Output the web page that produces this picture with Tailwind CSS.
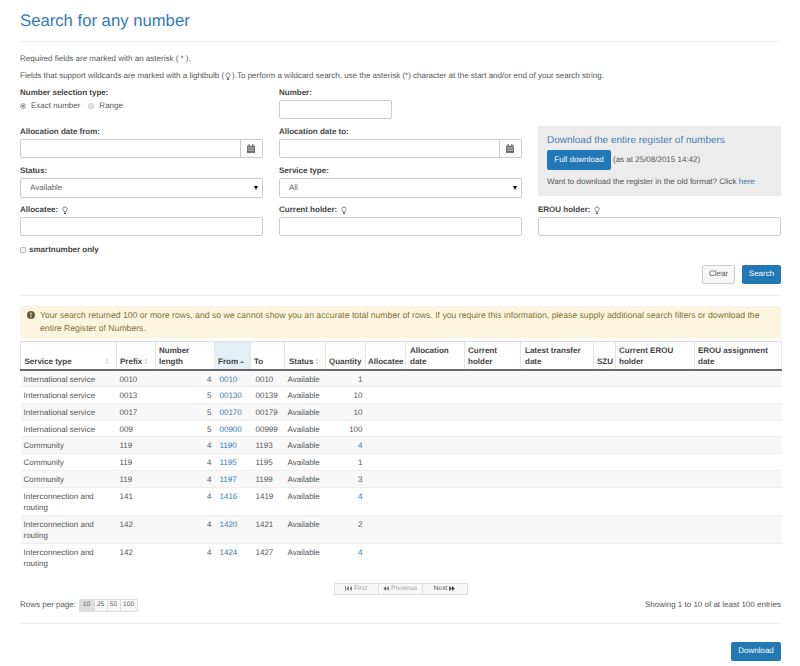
<!DOCTYPE html>
<html lang="en">
<head>
<meta charset="utf-8">
<title>Search for any number</title>
<script src="https://cdn.jsdelivr.net/npm/@tailwindcss/browser@4"></script>
</head>
<body class="bg-white font-['Liberation_Sans',Arial,sans-serif] [text-rendering:geometricPrecision] text-[8px] leading-[12px] text-[#555]">
<svg class="hidden" aria-hidden="true">
  <symbol id="bulb" viewBox="0 0 10 14"><path d="M5 1a3.6 3.6 0 0 0-2.2 6.4c.6.6.9 1.2.9 2h2.6c0-.8.3-1.4.9-2A3.6 3.6 0 0 0 5 1z" fill="none" stroke="currentColor" stroke-width="1.1"/><rect x="3.5" y="10.3" width="3" height="2.6" rx=".6" fill="currentColor"/></symbol>
  <symbol id="cal" viewBox="0 0 10 11"><path d="M0 2h10v9H0z" fill="currentColor"/><path d="M2 0h1.4v2.4H2zM6.6 0H8v2.4H6.6z" fill="currentColor"/><path d="M.8 4h8.4M.8 6h8.4M.8 8h8.4" stroke="#fff" stroke-width=".6"/></symbol>
  <symbol id="sort" viewBox="0 0 6 10"><path d="M3 1l2 2.6H1zM3 9L1 6.4h4z" fill="#bbb"/></symbol>
  <symbol id="first" viewBox="0 0 11 8"><path d="M0 0h1.4v8H0zM6 0v8L2 4zM11 0v8L7 4z" fill="currentColor"/></symbol>
  <symbol id="prev" viewBox="0 0 9 8"><path d="M4.5 0v8L0 4zM9 0v8L4.500 4z" fill="currentColor"/></symbol>
  <symbol id="next" viewBox="0 0 9 8"><path d="M0 0v8l4.500-4zM4.500 0v8L9 4z" fill="currentColor"/></symbol>
</svg>
<main class="w-[800px] h-[666px] overflow-hidden pl-[20px] pr-[19px]">
  <h1 class="pt-[10px] text-[16.7px] leading-[21px] text-[#337ab7] pb-[10px] border-b border-[#eee]">Search for any number</h1>

  <p class="mt-[11px] leading-[12px]">Required fields are marked with an asterisk ( <span class="text-[#c9302c]">*</span> ).</p>
  <p class="mt-[5px] leading-[12px] flex items-center whitespace-pre">Fields that support wildcards are marked with a lightbulb (<svg class="mx-[1px] w-[6px] h-[9px] text-[#555]"><use href="#bulb"/></svg>).To perform a wildcard search, use the asterisk (*) character at the start and/or end of your search string.</p>

  <div class="mt-[5px] grid grid-cols-[242.5px_242.5px_242.5px] gap-x-[16.5px]">
    <div class="h-[39px]">
      <div class="font-bold text-[#444]">Number selection type:</div>
      <div class="mt-[1px] flex items-center">
        <span class="w-[6px] h-[6px] rounded-full border border-[#bbb] bg-[#777] shadow-[inset_0_0_0_1px_#eee] mr-[5px]"></span><span>Exact number</span>
        <span class="ml-[8px] w-[6px] h-[6px] rounded-full border border-[#ccc] bg-[#e4e4e4] mr-[5px]"></span><span>Range</span>
      </div>
    </div>
    <div class="h-[39px]">
      <div class="font-bold text-[#444]">Number:</div>
      <div class="mt-[1px] w-[113px] h-[19px] rounded-[2px] border border-[#ccc] bg-white"></div>
    </div>
    <div></div>

    <div class="h-[39px]">
      <div class="font-bold text-[#444]">Allocation date from:</div>
      <div class="mt-[1px] h-[19px] flex rounded-[2px] border border-[#ccc]">
        <div class="flex-1"></div>
        <div class="w-[22px] border-l border-[#ccc] flex items-center justify-center text-[#666]"><svg class="w-[8px] h-[9px]"><use href="#cal"/></svg></div>
      </div>
    </div>
    <div class="h-[39px]">
      <div class="font-bold text-[#444]">Allocation date to:</div>
      <div class="mt-[1px] h-[19px] flex rounded-[2px] border border-[#ccc]">
        <div class="flex-1"></div>
        <div class="w-[22px] border-l border-[#ccc] flex items-center justify-center text-[#666]"><svg class="w-[8px] h-[9px]"><use href="#cal"/></svg></div>
      </div>
    </div>
    <div class="row-span-2 h-[70px] bg-[#ececec] px-[9px] pt-[9px]">
      <div class="text-[10px] leading-[12px] text-[#4a7fb5]">Download the entire register of numbers</div>
      <div class="mt-[3px] flex items-center">
        <span class="h-[19.5px] w-[64px] rounded-[2px] bg-[#2277b5] text-white flex items-center justify-center">Full download</span>
        <span class="ml-[2px]">(as at 25/08/2015 14:42)</span>
      </div>
      <div class="mt-[6.5px]">Want to download the register in the old format? Click <span class="text-[#337ab7]">here</span></div>
    </div>

    <div class="h-[39px]">
      <div class="font-bold text-[#444]">Status:</div>
      <div class="mt-[1px] h-[20px] flex items-center justify-between rounded-[2px] border border-[#ccc] pl-[9px] pr-[4px]"><span class="text-[#666]">Available</span><span class="w-0 h-0 border-x-[2.5px] border-x-transparent border-t-[4px] border-t-black"></span></div>
    </div>
    <div class="h-[39px]">
      <div class="font-bold text-[#444]">Service type:</div>
      <div class="mt-[1px] h-[20px] flex items-center justify-between rounded-[2px] border border-[#ccc] pl-[9px] pr-[4px]"><span class="text-[#666]">All</span><span class="w-0 h-0 border-x-[2.5px] border-x-transparent border-t-[4px] border-t-black"></span></div>
    </div>

    <div>
      <div class="font-bold text-[#444] flex items-center">Allocatee:<svg class="ml-[4px] w-[6px] h-[9px] text-[#444]"><use href="#bulb"/></svg></div>
      <div class="mt-[1px] h-[19px] rounded-[2px] border border-[#ccc]"></div>
    </div>
    <div>
      <div class="font-bold text-[#444] flex items-center">Current holder:<svg class="ml-[4px] w-[6px] h-[9px] text-[#444]"><use href="#bulb"/></svg></div>
      <div class="mt-[1px] h-[19px] rounded-[2px] border border-[#ccc]"></div>
    </div>
    <div>
      <div class="font-bold text-[#444] flex items-center">EROU holder:<svg class="ml-[4px] w-[6px] h-[9px] text-[#444]"><use href="#bulb"/></svg></div>
      <div class="mt-[1px] h-[19px] rounded-[2px] border border-[#ccc]"></div>
    </div>
  </div>

  <div class="mt-[8px] flex items-center font-bold text-[#444]"><span class="w-[6px] h-[6px] rounded-[1px] border border-[#bbb] bg-[#f2f2f2] mr-[3px]"></span>smartnumber only</div>

  <div class="mt-[9px] flex justify-end gap-[7px]">
    <span class="w-[33px] h-[18.5px] rounded-[2px] border border-[#ccc] bg-[#f7f7f7] text-[#555] flex items-center justify-center">Clear</span>
    <span class="w-[39px] h-[18.5px] rounded-[2px] bg-[#2277b5] text-white flex items-center justify-center">Search</span>
  </div>
  <div class="mt-[11px] border-t border-[#eee]"></div>

  <div class="mt-[10px] h-[32px] rounded-[2px] bg-[#fcf6e0] text-[#8a6d3b] pl-[20px] pr-[8px] pt-[3px] text-[8.67px] leading-[13px] relative">
    <svg class="absolute left-[7px] top-[5px] w-[8px] h-[8px]" viewBox="0 0 8 8"><circle cx="4" cy="4" r="4" fill="#6b5a3a"/><path d="M3.500 1.500h1l-.1 3.200h-.8zM3.500 5.300h1v1.100h-1z" fill="#fcf6e0"/></svg>
    Your search returned 100 or more rows, and so we cannot show you an accurate total number of rows. If you require this information, please supply additional search filters or download the entire Register of Numbers.
  </div>

  <table class="mt-[3px] w-[761px] table-fixed border-collapse text-[8px] leading-[11px]">
    <colgroup>
      <col class="w-[96px]"><col class="w-[39px]"><col class="w-[59px]"><col class="w-[36px]"><col class="w-[34px]"><col class="w-[41px]"><col class="w-[40px]"><col class="w-[40px]"><col class="w-[59px]"><col class="w-[56px]"><col class="w-[73px]"><col class="w-[22px]"><col class="w-[79px]"><col class="w-[87px]">
    </colgroup>
    <thead class="font-bold text-[#444]">
      <tr class="h-[29px] border-t border-t-[#ddd] border-b-2 border-b-[#666] text-left align-bottom">
        <th class="pl-[3.5px] pr-[3px] pb-[2px] font-bold border-l border-r border-[#e5e5e5]"><span class="flex items-center justify-between pr-[4px]">Service type<svg class="w-[4px] h-[7px]"><use href="#sort"/></svg></span></th>
        <th class="px-[3px] pb-[2px] font-bold border-r border-[#e5e5e5]"><span class="flex items-center gap-[2px]">Prefix<svg class="w-[4px] h-[7px]"><use href="#sort"/></svg></span></th>
        <th class="px-[3px] pb-[2px] font-bold border-r border-[#e5e5e5]">Number length</th>
        <th class="px-[3px] pb-[2px] font-bold bg-[#e3eef5] border-r border-[#e5e5e5]"><span class="flex items-center gap-[2px]">From<span class="w-0 h-0 border-x-[2px] border-x-transparent border-b-[2px] border-b-[#666]"></span></span></th>
        <th class="px-[3px] pb-[2px] font-bold border-r border-[#e5e5e5]">To</th>
        <th class="px-[4px] pb-[2px] font-bold border-r border-[#e5e5e5]"><span class="flex items-center gap-[2px]">Status<svg class="w-[4px] h-[7px]"><use href="#sort"/></svg></span></th>
        <th class="px-[3px] pb-[2px] font-bold border-r border-[#e5e5e5]">Quantity</th>
        <th class="px-[2px] pb-[2px] font-bold border-r border-[#e5e5e5] whitespace-nowrap overflow-hidden">Allocatee</th>
        <th class="px-[4px] pb-[2px] font-bold border-r border-[#e5e5e5]">Allocation date</th>
        <th class="px-[3px] pb-[2px] font-bold border-r border-[#e5e5e5]">Current holder</th>
        <th class="px-[4px] pb-[2px] font-bold border-r border-[#e5e5e5]">Latest transfer date</th>
        <th class="px-[3px] pb-[2px] font-bold border-r border-[#e5e5e5]">SZU</th>
        <th class="px-[3px] pb-[2px] font-bold border-r border-[#e5e5e5]">Current EROU holder</th>
        <th class="px-[3px] pb-[2px] font-bold border-r border-[#e5e5e5]">EROU assignment date</th>
      </tr>
    </thead>
    <tbody class="align-top text-[#555]">
      <tr class="h-[16.7px] bg-[#f8f8f8] border-b border-[#eee]"><td class="pl-[3px] pt-[3px]">International service</td><td class="pl-[3px] pt-[3px]">0010</td><td class="pr-[3px] pt-[3px] text-right">4</td><td class="pl-[5px] pt-[3px] text-[#337ab7]">0010</td><td class="pl-[5px] pt-[3px]">0010</td><td class="pl-[3px] pt-[3px]">Available</td><td class="pr-[3px] pt-[3px] text-right">1</td><td colspan="7"></td></tr>
      <tr class="h-[16.7px] border-b border-[#eee]"><td class="pl-[3px] pt-[3px]">International service</td><td class="pl-[3px] pt-[3px]">0013</td><td class="pr-[3px] pt-[3px] text-right">5</td><td class="pl-[5px] pt-[3px] text-[#337ab7]">00130</td><td class="pl-[5px] pt-[3px]">00139</td><td class="pl-[3px] pt-[3px]">Available</td><td class="pr-[3px] pt-[3px] text-right">10</td><td colspan="7"></td></tr>
      <tr class="h-[16.7px] bg-[#f8f8f8] border-b border-[#eee]"><td class="pl-[3px] pt-[3px]">International service</td><td class="pl-[3px] pt-[3px]">0017</td><td class="pr-[3px] pt-[3px] text-right">5</td><td class="pl-[5px] pt-[3px] text-[#337ab7]">00170</td><td class="pl-[5px] pt-[3px]">00179</td><td class="pl-[3px] pt-[3px]">Available</td><td class="pr-[3px] pt-[3px] text-right">10</td><td colspan="7"></td></tr>
      <tr class="h-[16.7px] border-b border-[#eee]"><td class="pl-[3px] pt-[3px]">International service</td><td class="pl-[3px] pt-[3px]">009</td><td class="pr-[3px] pt-[3px] text-right">5</td><td class="pl-[5px] pt-[3px] text-[#337ab7]">00900</td><td class="pl-[5px] pt-[3px]">00999</td><td class="pl-[3px] pt-[3px]">Available</td><td class="pr-[3px] pt-[3px] text-right">100</td><td colspan="7"></td></tr>
      <tr class="h-[16.7px] bg-[#f8f8f8] border-b border-[#eee]"><td class="pl-[3px] pt-[3px]">Community</td><td class="pl-[3px] pt-[3px]">119</td><td class="pr-[3px] pt-[3px] text-right">4</td><td class="pl-[5px] pt-[3px] text-[#337ab7]">1190</td><td class="pl-[5px] pt-[3px]">1193</td><td class="pl-[3px] pt-[3px]">Available</td><td class="pr-[3px] pt-[3px] text-right text-[#337ab7]">4</td><td colspan="7"></td></tr>
      <tr class="h-[16.7px] border-b border-[#eee]"><td class="pl-[3px] pt-[3px]">Community</td><td class="pl-[3px] pt-[3px]">119</td><td class="pr-[3px] pt-[3px] text-right">4</td><td class="pl-[5px] pt-[3px] text-[#337ab7]">1195</td><td class="pl-[5px] pt-[3px]">1195</td><td class="pl-[3px] pt-[3px]">Available</td><td class="pr-[3px] pt-[3px] text-right">1</td><td colspan="7"></td></tr>
      <tr class="h-[17.6px] bg-[#f8f8f8] border-b border-[#eee]"><td class="pl-[3px] pt-[3px]">Community</td><td class="pl-[3px] pt-[3px]">119</td><td class="pr-[3px] pt-[3px] text-right">4</td><td class="pl-[5px] pt-[3px] text-[#337ab7]">1197</td><td class="pl-[5px] pt-[3px]">1199</td><td class="pl-[3px] pt-[3px]">Available</td><td class="pr-[3px] pt-[3px] text-right">3</td><td colspan="7"></td></tr>
      <tr class="h-[28px] border-b border-[#eee]"><td class="pl-[3px] pt-[3px]">Interconnection and routing</td><td class="pl-[3px] pt-[3px]">141</td><td class="pr-[3px] pt-[3px] text-right">4</td><td class="pl-[5px] pt-[3px] text-[#337ab7]">1416</td><td class="pl-[5px] pt-[3px]">1419</td><td class="pl-[3px] pt-[3px]">Available</td><td class="pr-[3px] pt-[3px] text-right text-[#337ab7]">4</td><td colspan="7"></td></tr>
      <tr class="h-[28px] bg-[#f8f8f8] border-b border-[#eee]"><td class="pl-[3px] pt-[3px]">Interconnection and routing</td><td class="pl-[3px] pt-[3px]">142</td><td class="pr-[3px] pt-[3px] text-right">4</td><td class="pl-[5px] pt-[3px] text-[#337ab7]">1420</td><td class="pl-[5px] pt-[3px]">1421</td><td class="pl-[3px] pt-[3px]">Available</td><td class="pr-[3px] pt-[3px] text-right">2</td><td colspan="7"></td></tr>
      <tr class="h-[28px]"><td class="pl-[3px] pt-[3px]">Interconnection and routing</td><td class="pl-[3px] pt-[3px]">142</td><td class="pr-[3px] pt-[3px] text-right">4</td><td class="pl-[5px] pt-[3px] text-[#337ab7]">1424</td><td class="pl-[5px] pt-[3px]">1427</td><td class="pl-[3px] pt-[3px]">Available</td><td class="pr-[3px] pt-[3px] text-right text-[#337ab7]">4</td><td colspan="7"></td></tr>
    </tbody>
  </table>

  <div class="mt-[11px] flex justify-center text-[6.7px] leading-[11px]">
    <div class="flex h-[12.5px] border border-[#ddd] rounded-[1px] bg-[#f8f8f8] text-[#999]">
      <span class="w-[44px] flex items-center justify-center gap-[2px] border-r border-[#ddd]"><svg class="w-[7px] h-[5px] text-[#777]"><use href="#first"/></svg>First</span>
      <span class="w-[44px] flex items-center justify-center gap-[2px] border-r border-[#ddd]"><svg class="w-[6px] h-[5px] text-[#777]"><use href="#prev"/></svg>Previous</span>
      <span class="w-[44px] flex items-center justify-center gap-[2px] text-[#555]">Next<svg class="w-[6px] h-[5px] text-[#444]"><use href="#next"/></svg></span>
    </div>
  </div>

  <div class="mt-[4px] flex items-center justify-between">
    <div class="flex items-center">
      <span>Rows per page:</span>
      <div class="ml-[2.5px] flex h-[12.5px] border border-[#ddd] rounded-[1px] text-[6.7px] text-[#666]">
        <span class="w-[14px] bg-[#ddd] flex items-center justify-center">10</span>
        <span class="w-[13px] bg-[#f8f8f8] border-l border-[#ddd] flex items-center justify-center">25</span>
        <span class="w-[13px] bg-[#f8f8f8] border-l border-[#ddd] flex items-center justify-center">50</span>
        <span class="w-[17px] bg-[#f8f8f8] border-l border-[#ddd] flex items-center justify-center">100</span>
      </div>
    </div>
    <span>Showing 1 to 10 of at least 100 entries</span>
  </div>

  <div class="mt-[11px] border-t border-[#eee]"></div>
  <div class="mt-[18px] flex justify-end">
    <span class="w-[50px] h-[19px] rounded-[2px] bg-[#2277b5] text-white flex items-center justify-center">Download</span>
  </div>
</main>
</body>
</html>
